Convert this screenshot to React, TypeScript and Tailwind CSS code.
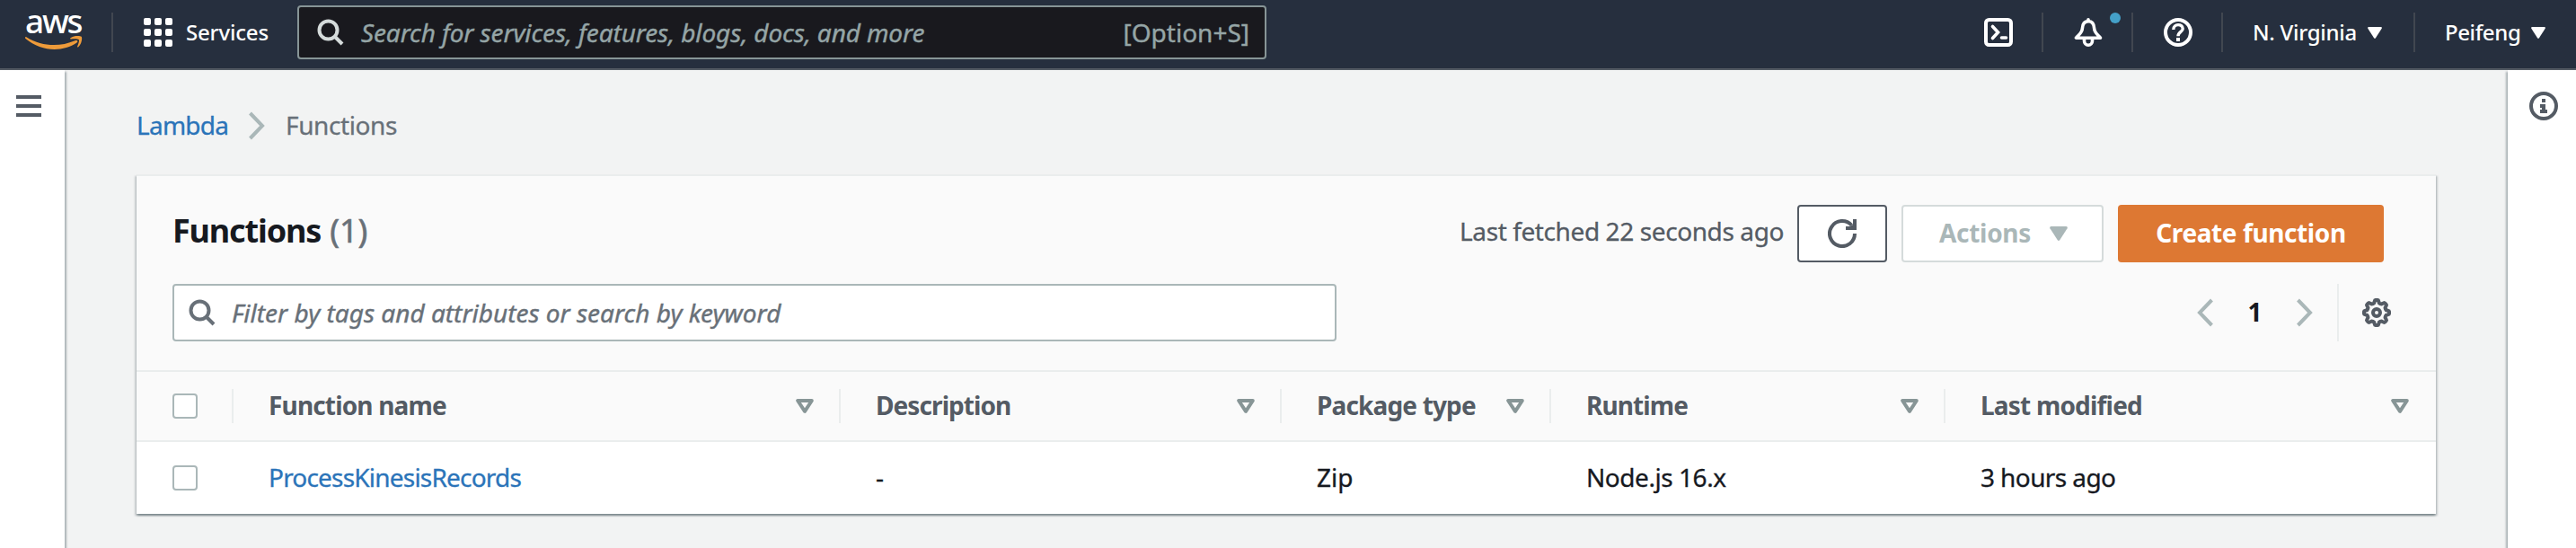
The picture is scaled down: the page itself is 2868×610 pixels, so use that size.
import type { ReactNode } from "react";

type IconProps = { className?: string };

function SearchIcon({ className }: IconProps) {
  return (
    <svg viewBox="0 0 30 30" fill="none" stroke="currentColor" strokeWidth="4" className={`size-[30px] shrink-0 ${className ?? ""}`}>
      <circle cx="12.5" cy="12.5" r="10" />
      <path d="M19.5 19.5 L28 28" />
    </svg>
  );
}

function CaretDown({ className }: IconProps) {
  return (
    <svg viewBox="0 0 20 16" className={`shrink-0 ${className ?? ""}`} fill="currentColor">
      <path d="M1.5 0 H18.5 Q20.4 .4 19.6 2.2 L11.2 15.2 Q10 16.6 8.8 15.2 L.4 2.2 Q-.4 .4 1.5 0Z" />
    </svg>
  );
}

function SortIcon() {
  return (
    <svg viewBox="0 0 20 16" fill="none" stroke="#879596" strokeWidth="4" strokeLinejoin="round" className="h-4 w-5 shrink-0">
      <path d="M2.2 2 H17.8 L10 13.8Z" />
    </svg>
  );
}

function Chevron({ flip }: { flip?: boolean }) {
  return (
    <svg viewBox="0 0 18 32" fill="none" stroke="#aab7b8" strokeWidth="4" className={`h-8 w-[18px] shrink-0 ${flip ? "-scale-x-100" : ""}`}>
      <path d="M1.5 2 L15 16 L1.5 30" />
    </svg>
  );
}

function AwsLogo() {
  return (
    <div className="flex h-[72px] w-[124px] flex-col pl-[28px]">
      <div className="h-[46px] text-[37px] font-medium leading-[46px] tracking-[-2.2px] text-white">aws</div>
      <svg viewBox="0 0 64 16" className="-mt-[6px] h-4 w-16" fill="#ee9b3a">
        <path d="M1.3 1.2 C19 12 38 12.5 55.5 5.2 C58 4.3 59.5 6 57.5 7.5 C42 18.2 18 17.8 .4 3 C-.4 2 .2 .6 1.3 1.2Z" />
        <path d="M50.5 2.2 C54 -.4 61 -.3 62.7 .8 C64 3 62.5 9.5 59.3 12.2 C58.3 12.9 57.7 12.4 58.2 11.5 C59.5 8.5 60.5 5.4 59.8 4.3 C58.7 3 54.5 3.1 51.2 3.4 C50 3.5 49.6 2.9 50.5 2.2Z" />
      </svg>
    </div>
  );
}

function CloudShellIcon() {
  return (
    <svg viewBox="0 0 32 32" fill="none" stroke="currentColor" strokeWidth="4" className="size-8">
      <rect x="2" y="2" width="28" height="28" rx="3.5" />
      <path d="M9.5 9.5 L15.5 16 L9.5 22.5" strokeLinecap="round" strokeWidth="3.6" />
      <path d="M19.5 22 H24.5" strokeLinecap="round" strokeWidth="3.6" />
    </svg>
  );
}

function BellIcon() {
  return (
    <svg viewBox="0 0 32 32" fill="none" stroke="currentColor" strokeWidth="3.6" strokeLinejoin="round" className="size-8">
      <path d="M16 3.8 C11 3.8 9.6 8 9.4 11.5 C9.2 16.5 5.5 18.5 2.5 22.2 H29.5 C26.5 18.5 22.8 16.5 22.6 11.5 C22.4 8 21 3.8 16 3.8Z" />
      <path d="M16 1.8 V3" strokeLinecap="round" />
      <path d="M11.5 23 V25.5 A4.5 4.7 0 0 0 20.5 25.5 V23" />
    </svg>
  );
}

function HelpIcon() {
  return (
    <svg viewBox="0 0 32 32" fill="none" stroke="currentColor" strokeWidth="4" className="size-8">
      <circle cx="16" cy="16" r="14" />
      <path d="M10.8 13 C10.8 5.8 21.2 6.2 21.2 12 C21.2 15.5 16 15.5 16 20.3" strokeWidth="3.4" />
      <path d="M14 24 H18" />
    </svg>
  );
}

function InfoIcon() {
  return (
    <svg viewBox="0 0 32 32" fill="none" stroke="#545b64" className="size-8">
      <circle cx="16" cy="16" r="14" strokeWidth="4" />
      <path d="M14 8 H18 V12 H14Z M12 14 H18 V20 H20 V24 H12 V20 H14 V18 H12Z" fill="#545b64" stroke="none" />
    </svg>
  );
}

function RefreshIcon() {
  return (
    <svg viewBox="0 0 32 32" className="size-8" fill="none" stroke="#545b64" strokeWidth="4">
      <path d="M30 16 A14 14 0 1 1 26.5 6.8" />
      <path d="M32 0 V12 H20 V8 H24.5 L28 6 V0Z" fill="#545b64" stroke="none" />
    </svg>
  );
}

const gearPath =
  Array.from({ length: 96 }, (_, i) => {
    const a = (i / 96) * Math.PI * 2;
    const r = 12.4 + 1.7 * Math.tanh(2.2 * Math.cos(8 * a));
    return `${i ? "L" : "M"}${(16 + r * Math.sin(a)).toFixed(2)} ${(16 - r * Math.cos(a)).toFixed(2)}`;
  }).join(" ") + "Z";

function GearIcon() {
  return (
    <svg viewBox="0 0 32 32" className="size-8" fill="none" stroke="#545b64" strokeWidth="4">
      <path d={gearPath} />
      <circle cx="16" cy="16" r="4" />
    </svg>
  );
}

function NavDivider() {
  return <div className="h-[44px] w-[2px] shrink-0 bg-[#414750]" />;
}

function NavIcon({ children }: { children: ReactNode }) {
  return (
    <div className="flex w-[100px] items-center">
      <div className="relative flex flex-1 justify-center pl-[2px]">{children}</div>
      <NavDivider />
    </div>
  );
}

function Header() {
  return (
    <header className="flex h-[78px] items-start border-b-2 border-[#545b64] bg-[#262f3e] text-white">
      <AwsLogo />
      <div className="flex h-[72px] flex-1 items-center">
        <NavDivider />
        <div className="ml-[34px] grid grid-cols-3 gap-1">
          {Array.from({ length: 9 }, (_, i) => (
            <span key={i} className="size-2 rounded-[2px] bg-white" />
          ))}
        </div>
        <span className="ml-[15px] w-[124px] text-[24px] font-medium tracking-[-0.2px]">Services</span>
        <div className="flex h-[60px] w-[1079px] items-center rounded-[4px] border-2 border-[#879596] bg-[#19191e] pl-[20px] pr-[17px] text-[28px] text-[#95a5a6] [-webkit-text-stroke:0.4px]">
          <SearchIcon className="text-[#d5dbdb]" />
          <span className="ml-[19px] flex-1 italic tracking-[-0.12px]">Search for services, features, blogs, docs, and more</span>
          <span>[Option+S]</span>
        </div>
      </div>
      <nav className="flex h-[72px] w-[693px] items-center text-[24px] font-medium">
        <NavIcon>
          <CloudShellIcon />
        </NavIcon>
        <NavIcon>
          <BellIcon />
          <span className="absolute -top-[6px] left-[74px] size-3 rounded-full bg-[#44a0c8]" />
        </NavIcon>
        <NavIcon>
          <HelpIcon />
        </NavIcon>
        <div className="flex w-[214px] items-center pl-[33px]">
          <span className="w-[128px] tracking-[-0.3px]">N. Virginia</span>
          <CaretDown className="h-[13px] w-4" />
          <div className="flex-1" />
          <NavDivider />
        </div>
        <div className="flex items-center pl-[33px]">
          <span className="w-[96px] tracking-[-0.4px]">Peifeng</span>
          <CaretDown className="h-[13px] w-4" />
        </div>
      </nav>
    </header>
  );
}

function Checkbox() {
  return <span className="size-7 rounded-[4px] border-2 border-[#aab7b8] bg-white" />;
}

const columns = [
  { label: "Function name", spacing: "tracking-[-0.84px]" },
  { label: "Description", spacing: "tracking-[-0.92px]" },
  { label: "Package type", spacing: "tracking-[-0.85px]" },
  { label: "Runtime", spacing: "tracking-[-0.9px]" },
  { label: "Last modified", spacing: "tracking-[-0.8px]" },
];

const cells = [
  { value: "ProcessKinesisRecords", style: "tracking-[-0.8px] text-[#2b74b9]" },
  { value: "-", style: "" },
  { value: "Zip", style: "" },
  { value: "Node.js 16.x", style: "tracking-[-0.45px]" },
  { value: "3 hours ago", style: "tracking-[-0.6px]" },
];

function FunctionsTable() {
  return (
    <div className="text-[28px]">
      <div className="grid h-[80px] grid-cols-[108px_676px_491px_300px_439px_546px] items-center border-y-2 border-[#eaeded] bg-[#fafafa] font-bold text-[#545b64]">
        <div className="flex h-[38px] items-center border-r-2 border-[#eaeded] pl-10">
          <Checkbox />
        </div>
        {columns.map((c) => (
          <div key={c.label} className="flex h-[38px] items-center justify-between border-r-2 border-[#eaeded] pl-[39px] pr-[28px] last:border-transparent">
            <span className={`pb-[2px] ${c.spacing}`}>{c.label}</span>
            <SortIcon />
          </div>
        ))}
      </div>
      <div className="grid h-[80px] grid-cols-[108px_676px_491px_300px_439px_546px] items-center bg-white text-[#16191f] [-webkit-text-stroke:0.3px]">
        <div className="flex pl-10">
          <Checkbox />
        </div>
        {cells.map((c) => (
          <span key={c.value} className={`pb-[2px] pl-[39px] ${c.style}`}>
            {c.value}
          </span>
        ))}
      </div>
    </div>
  );
}

export default function App() {
  return (
    <div className="flex h-[610px] w-[2868px] flex-col overflow-hidden bg-[#f2f3f3] font-['Noto_Sans',sans-serif]">
      <Header />
      <div className="flex flex-1">
        <aside className="w-[72px] bg-white pl-[18px] pt-[28px] shadow-[2px_2px_2px_0_rgba(0,28,36,0.3)]">
          <div className="flex w-7 flex-col gap-[6px]">
            <span className="h-1 bg-[#545b64]" />
            <span className="h-1 bg-[#545b64]" />
            <span className="h-1 bg-[#545b64]" />
          </div>
        </aside>
        <main className="flex-1 px-20 pt-[36px]">
          <nav className="flex h-[50px] items-center text-[28px] [-webkit-text-stroke:0.3px]">
            <span className="w-[125px] pb-px tracking-[-0.75px] text-[#2b74b9]">Lambda</span>
            <div className="pt-[2px]">
              <Chevron />
            </div>
            <span className="ml-[23px] pb-px tracking-[-0.4px] text-[#687078]">Functions</span>
          </nav>
          <section className="mt-[30px] h-[378px] w-[2560px] border-t-2 border-[#eaeded] bg-[#fafafa] shadow-[0_2px_2px_0_rgba(0,28,36,0.3),2px_2px_2px_0_rgba(0,28,36,0.15),-2px_2px_2px_0_rgba(0,28,36,0.15)]">
            <div className="flex h-[96px] items-end pl-10 pr-[58px]">
              <h1 className="flex h-16 flex-1 items-center gap-[10px] pb-[6px] text-[36px]">
                <span className="font-bold tracking-[-1.15px] text-[#16191f]">Functions</span>
                <span className="text-[#687078] [-webkit-text-stroke:0.6px]">(1)</span>
              </h1>
              <div className="flex h-16 items-center text-[28px]">
                <span className="mr-[15px] pb-[6px] tracking-[-0.4px] text-[#545b64] [-webkit-text-stroke:0.3px]">Last fetched 22 seconds ago</span>
                <button className="flex h-16 w-[100px] items-center justify-center rounded-[4px] border-2 border-[#545b64] bg-white">
                  <RefreshIcon />
                </button>
                <button className="ml-4 flex h-16 w-[225px] items-center justify-between rounded-[4px] border-2 border-[#d5dbdb] bg-white pl-10 pr-[38px] font-bold tracking-[-0.3px] text-[#aab7b8]">
                  <span className="pb-[2px]">Actions</span>
                  <CaretDown className="h-4 w-5" />
                </button>
                <button className="ml-4 flex h-16 w-[296px] items-center justify-center rounded-[4px] bg-[#dd7833] pb-[2px] font-bold tracking-[-0.4px] text-white">
                  Create function
                </button>
              </div>
            </div>
            <div className="mt-6 flex h-16 items-center justify-between pl-10 pr-[50px]">
              <div className="flex h-16 w-[1296px] items-center rounded-[4px] border-2 border-[#aab7b8] bg-white pl-[16px] text-[28px] text-[#687078]">
                <SearchIcon />
                <span className="ml-[18px] italic [-webkit-text-stroke:0.4px]">Filter by tags and attributes or search by keyword</span>
              </div>
              <div className="flex h-16 items-center">
                <Chevron flip />
                <span className="w-[93px] pb-[2px] text-center text-[28px] font-bold text-[#16191f]">1</span>
                <Chevron />
                <div className="ml-[27px] mr-[26px] h-16 w-[2px] bg-[#eaeded]" />
                <GearIcon />
              </div>
            </div>
            <div className="mt-8">
              <FunctionsTable />
            </div>
          </section>
        </main>
        <aside className="w-[76px] bg-white pl-6 pt-6 shadow-[-2px_2px_2px_0_rgba(0,28,36,0.3)]">
          <InfoIcon />
        </aside>
      </div>
    </div>
  );
}
